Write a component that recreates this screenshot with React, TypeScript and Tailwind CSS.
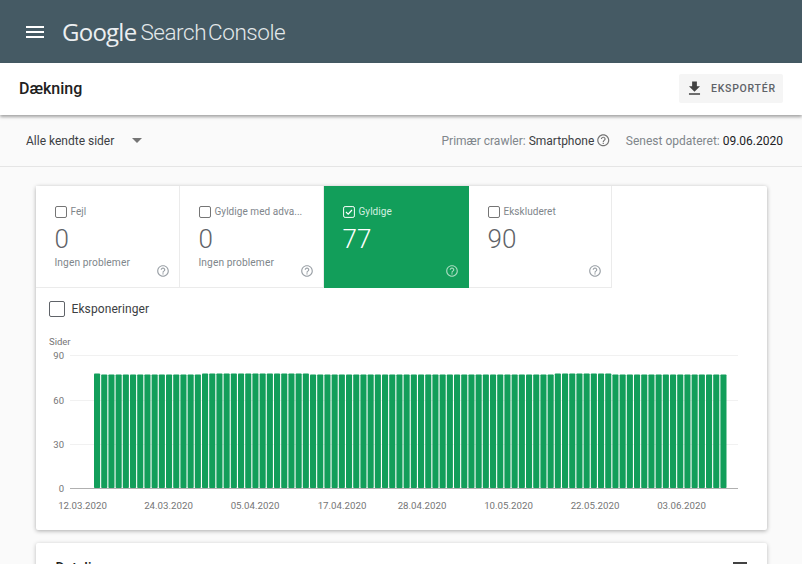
import React from "react";

const font = { fontFamily: '"Roboto", "Liberation Sans", sans-serif' };

function Help({ className }: { className: string }) {
  return (
    <svg viewBox="0 0 24 24" className={className} fill="currentColor">
      <path d="M11 18h2v-2h-2v2zm1-16C6.48 2 2 6.48 2 12s4.48 10 10 10 10-4.48 10-10S17.52 2 12 2zm0 18c-4.41 0-8-3.59-8-8s3.59-8 8-8 8 3.59 8 8-3.59 8-8 8zm0-14c-2.21 0-4 1.79-4 4h2c0-1.1.9-2 2-2s2 .9 2 2c0 2-3 1.75-3 5h2c0-2.25 3-2.5 3-5 0-2.21-1.79-4-4-4z" />
    </svg>
  );
}

function Tab({ label, value, sub, active, width }: { label: string; value: string; sub?: string; active?: boolean; width: string }) {
  return (
    <div className={`relative ${width} h-full pl-[19px] pr-2 pt-[19px] border-r border-b ${active ? "bg-[#129e5a] text-white border-[#129e5a]" : "bg-white border-[#ebebeb]"}`}>
      <div className="flex items-center h-[14px]">
        {active ? (
          <svg viewBox="0 0 12 12" className="w-[12px] h-[12px] mr-[4px] shrink-0" fill="none" stroke="white">
            <rect x="0.6" y="0.6" width="10.8" height="10.8" rx="1.5" strokeWidth="1" />
            <path d="M3 6l2.2 2.2L9 4" strokeWidth="1.2" />
          </svg>
        ) : (
          <span className="w-[12px] h-[12px] mr-[4px] shrink-0 border border-[#757575] rounded-[2px]" />
        )}
        <span className={`text-[10px] leading-[14px] tracking-[0.05px] whitespace-nowrap ${active ? "text-[#d4efe0]" : "text-[#80868b]"}`}>{label}</span>
      </div>
      <div className={`text-[26px] leading-[30px] mt-[5px] font-light ${active ? "text-white" : "text-[#5f6368]"}`}>{value}</div>
      {sub && <div className="text-[10.2px] leading-[14px] mt-[2px] tracking-[0.1px] text-[#80868b]">{sub}</div>}
      <Help className={`absolute right-[9px] bottom-[9px] w-[14px] h-[14px] ${active ? "text-[#a8dcc0]" : "text-[#9aa0a6]"}`} />
    </div>
  );
}

const labels = ["12.03.2020", "24.03.2020", "05.04.2020", "17.04.2020", "28.04.2020", "10.05.2020", "22.05.2020", "03.06.2020"];
const labelX = [82.5, 168.5, 255, 342, 422, 508.5, 595, 681.5];

function Chart() {
  const bars = Array.from({ length: 88 }, (_, i) => {
    const high = i === 0 || (i >= 15 && i <= 29) || (i >= 64 && i <= 71);
    return { x: 94 + i * 7.2, top: high ? 373.5 : 374.5 };
  });
  return (
    <svg viewBox="36 330 731 180" className="block w-[731px] h-[180px]" style={font}>
      <text x="49" y="345" fontSize="9.5" fill="#757575">Sider</text>
      {[
        [355.5, "90"],
        [400.5, "60"],
        [444.5, "30"],
        [488.5, "0"],
      ].map(([y, t]) => (
        <g key={t as string}>
          <line x1="70" x2="738" y1={y as number} y2={y as number} stroke={t === "0" ? "#b0b0b0" : "#f1f1f1"} strokeWidth="1" />
          <text x="64" y={(y as number) + 3} fontSize="9.5" textAnchor="end" fill="#757575">{t}</text>
        </g>
      ))}
      {bars.map((b, i) => (
        <rect key={i} x={b.x} y={b.top} width={6.1} height={488 - b.top} rx="0.8" fill="#129e5a" />
      ))}
      {labels.map((l, i) => (
        <text key={l} x={labelX[i]} y="509" fontSize="9.7" textAnchor="middle" fill="#757575">{l}</text>
      ))}
    </svg>
  );
}

export default function App() {
  return (
    <div className="w-[802px] h-[564px] overflow-hidden bg-[#fafafa] flex flex-col" style={font}>
      <header className="h-[63px] shrink-0 bg-[#455a64] flex items-center pl-[26px]">
        <svg viewBox="0 0 18 12" className="w-[18px] h-[12px] mr-[19px]" fill="#fff">
          <rect width="18" height="2" />
          <rect y="5" width="18" height="2" />
          <rect y="10" width="18" height="2" />
        </svg>
        <span className="text-[24px] leading-[30px] text-[#eceff1] tracking-[-0.75px] -ml-[1px] whitespace-nowrap" style={{ fontFamily: '"Open Sans", sans-serif' }}>Google</span>
        <span className="text-[22.5px] leading-[30px] ml-[4px] text-[#e3e8ea] font-light tracking-[-0.45px] [word-spacing:-3px] whitespace-nowrap">Search Console</span>
      </header>

      <div className="relative z-10 h-[52px] shrink-0 bg-white flex items-center justify-between pl-[19px] pr-[19px] shadow-[0_2px_3px_rgba(0,0,0,0.35)]">
        <h1 className="text-[16px] font-medium text-[#212121]">Dækning</h1>
        <button className="h-[29px] w-[104px] mb-[1px] rounded-[2px] bg-[#f5f5f5] flex items-center pl-[6px]">
          <svg viewBox="0 0 24 24" className="w-[19px] h-[19px] mr-[7px]" fill="#424242">
            <path d="M19 9h-4V3H9v6H5l7 7 7-7zM5 18v2h14v-2H5z" />
          </svg>
          <span className="text-[10.5px] font-medium tracking-[0.75px] text-[#5f6368]">EKSPORTÉR</span>
        </button>
      </div>

      <div className="h-[52px] shrink-0 flex items-center justify-between pl-[26px] pr-[19px] border-b border-[#e5e5e5]">
        <div className="flex items-center">
          <span className="text-[12px] text-[#3c4043]">Alle kendte sider</span>
          <svg viewBox="0 0 10 5" className="w-[10px] h-[5px] ml-[18px]" fill="#757575"><path d="M0 0h10L5 5z" /></svg>
        </div>
        <div className="flex items-center text-[12px]">
          <span className="text-[#80868b]">Primær crawler: </span>
          <span className="text-[#3c4043] ml-[3px]">Smartphone</span>
          <Help className="w-[14.5px] h-[14.5px] ml-[2px] text-[#757575]" />
          <span className="text-[#80868b] ml-[15px]">Senest opdateret: </span>
          <span className="text-[#202124] ml-[3px]">09.06.2020</span>
        </div>
      </div>

      <div className="flex flex-col items-center gap-[13px] pt-[19px]">
        <section className="w-[731px] h-[344px] shrink-0 bg-white rounded-[2px] shadow-[0_1px_4px_rgba(0,0,0,0.32)]">
          <div className="flex h-[102px]">
            <Tab width="w-[144px]" label="Fejl" value="0" sub="Ingen problemer" />
            <Tab width="w-[144px]" label="Gyldige med adva..." value="0" sub="Ingen problemer" />
            <Tab width="w-[145px]" label="Gyldige" value="77" active />
            <Tab width="w-[143px]" label="Ekskluderet" value="90" />
          </div>
          <div className="flex items-center h-[42px] pb-[1px] pl-[13px]">
            <span className="w-[16px] h-[16px] border-[1.5px] border-[#5f6368] rounded-[2px] mr-[7px]" />
            <span className="text-[12px] text-[#3c4043] tracking-[0.1px]">Eksponeringer</span>
          </div>
          <Chart />
        </section>
        <section className="relative w-[731px] h-[100px] shrink-0 bg-white rounded-[2px] shadow-[0_1px_4px_rgba(0,0,0,0.25)] pl-[20px] pt-[15px]">
          <h2 className="text-[14px] leading-[20px] font-medium text-[#212121]">Detaljer</h2>
          <svg viewBox="0 0 14 10" className="absolute right-[20px] top-[19px] w-[14px] h-[10px]" fill="#424242">
            <rect width="14" height="2" />
            <rect x="2" y="4" width="10" height="2" />
            <rect x="5" y="8" width="4" height="2" />
          </svg>
        </section>
      </div>
    </div>
  );
}
